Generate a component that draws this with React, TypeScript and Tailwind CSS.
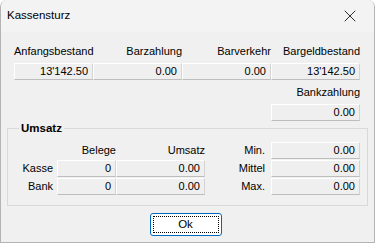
import { X } from 'lucide-react';

const field =
  'h-[17px] bg-[#efefef] border border-t-white border-l-white border-b-[#bdbdbd] border-r-[#d4d4d4] flex items-center justify-end pr-[4px]';

function Field({ value }: { value: string }) {
  return <div className={field}>{value}</div>;
}

export default function App() {
  return (
    <div
      className="w-[375px] h-[243px] bg-[#f0f0f0] text-[11px] text-[#000] border-x border-b border-[#b4b4b4] rounded-t-[7px] overflow-hidden flex flex-col leading-none"
      style={{ fontFamily: '"Liberation Sans", Arial, sans-serif' }}
    >
      {/* Title bar */}
      <div className="h-[32px] bg-[#f3f3f3] flex items-center justify-between pl-[6px] pr-[14px]">
        <span className="text-[11.5px] mt-[-1px]">Kassensturz</span>
        <X className="w-[20px] h-[20px] text-[#1a1a1a]" strokeWidth={1.1} />
      </div>

      {/* Top section */}
      <div className="pl-[13px] pt-[14px]">
        <div className="grid grid-cols-[79px_89px_89px_89px] gap-y-[4px]">
          <div className="h-[13px] text-right">Anfangsbestand</div>
          <div className="h-[13px] text-right">Barzahlung</div>
          <div className="h-[13px] text-right">Barverkehr</div>
          <div className="h-[13px] text-right">Bargeldbestand</div>
          <Field value="13'142.50" />
          <Field value="0.00" />
          <Field value="0.00" />
          <Field value="13'142.50" />
        </div>
        <div className="grid grid-cols-[79px_89px_89px_89px] mt-[7px] gap-y-[4px]">
          <div className="col-start-4 h-[13px] text-right">Bankzahlung</div>
          <div className="col-start-4">
            <Field value="0.00" />
          </div>
        </div>
      </div>

      {/* Umsatz group */}
      <div className="relative ml-[6px] mt-[7px] w-[361px] h-[78px] border border-[#d9d9d9] pt-[13px]">
        <span className="absolute left-[11px] top-[-6px] px-[2px] bg-[#f0f0f0] font-bold text-[11.5px]">
          Umsatz
        </span>
        <div className="grid grid-cols-[49px_59px_89px_66px_89px] gap-y-[1px]">
          <div />
          <div className="h-[17px] flex items-center justify-end">Belege</div>
          <div className="h-[17px] flex items-center justify-end">Umsatz</div>
          <div className="h-[17px] flex items-center justify-end pr-[6px]">Min.</div>
          <Field value="0.00" />

          <div className="h-[17px] flex items-center justify-end pr-[4px]">Kasse</div>
          <Field value="0" />
          <Field value="0.00" />
          <div className="h-[17px] flex items-center justify-end pr-[6px]">Mittel</div>
          <Field value="0.00" />

          <div className="h-[17px] flex items-center justify-end pr-[4px]">Bank</div>
          <Field value="0" />
          <Field value="0.00" />
          <div className="h-[17px] flex items-center justify-end pr-[6px]">Max.</div>
          <Field value="0.00" />
        </div>
      </div>

      {/* Button */}
      <div className="flex justify-center pr-[4px] mt-[7px]">
        <button className="w-[72px] h-[23px] bg-white border border-[#0067c0] rounded-[3px] p-[2px]">
          <div className="w-full h-full border border-dotted border-black flex items-center justify-center text-[11.5px]">
            Ok
          </div>
        </button>
      </div>
    </div>
  );
}
